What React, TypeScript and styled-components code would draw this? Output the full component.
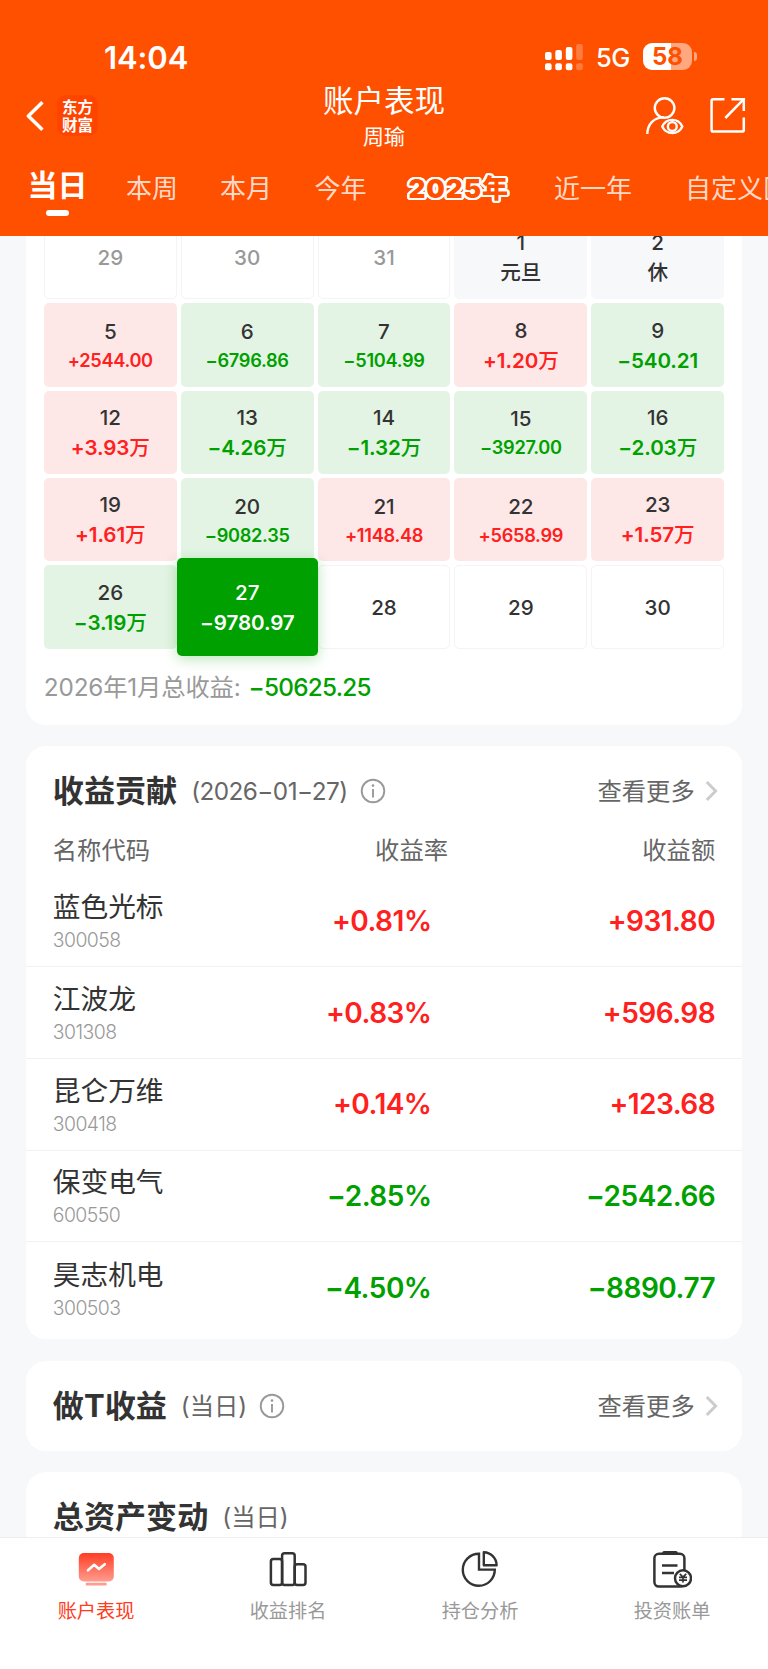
import React from "react";
import styled, { createGlobalStyle } from "styled-components";

const ORANGE = "#ff5000";
const RED = "#ff2020";
const GREEN = "#00a000";
const SANS = `Inter, "Noto Sans CJK SC", sans-serif`;

const GlobalStyle = createGlobalStyle`
  *, *::before, *::after { box-sizing: border-box; }
  body { margin: 0; background: #f7f8fa; font-family: ${SANS}; color: #333; }
  svg { display: block; flex: none; }
`;

const Screen = styled.div`
  width: 768px;
  height: 1669px;
  display: flex;
  flex-direction: column;
  overflow: hidden;
  background: #f7f8fa;
`;

/* ---------- header ---------- */

const Header = styled.header`
  flex: none;
  height: 235.7px;
  background: ${ORANGE};
  color: #fff;
`;

const StatusBar = styled.div`
  height: 80px;
  padding: 34px 71px 0 104px;
  display: flex;
  justify-content: space-between;
`;

const Clock = styled.div`
  font-size: 31px;
  font-weight: 600;
  line-height: 47px;
  letter-spacing: -0.1px;
`;

const StatusIcons = styled.div`
  height: 46px;
  display: flex;
  align-items: center;
`;

const Network = styled.span`
  margin: 2px 13px 0 13px;
  width: 34px;
  font-size: 25.5px;
  font-weight: 450;
  line-height: 46px;
  letter-spacing: -0.6px;
`;

const Battery = styled.div`
  width: 49px;
  height: 27px;
  margin-top: -2px;
  border-radius: 9px;
  background: linear-gradient(to right, #fff 58%, rgba(255, 255, 255, 0.5) 58%);
  color: ${ORANGE};
  font-size: 24px;
  font-weight: 700;
  line-height: 27px;
  text-align: center;
`;

const BatteryTip = styled.i`
  width: 3px;
  height: 9px;
  margin: -2px 0 0 2px;
  border-radius: 0 3px 3px 0;
  background: rgba(255, 255, 255, 0.5);
`;

const NavBar = styled.div`
  height: 76px;
  padding: 0 22px 0 26px;
  display: grid;
  grid-template-columns: 200px 1fr 204px;
`;

const NavLeft = styled.div`
  display: flex;
  align-items: flex-start;
  padding-top: 15px;
  gap: 13px;
`;

const Logo = styled.div`
  width: 41px;
  height: 41px;
  padding-top: 3px;
  border-radius: 9px;
  background: #ff4400;
  font-family: "Noto Sans CJK SC", sans-serif;
  font-size: 15.5px;
  font-weight: 700;
  line-height: 17.5px;
  text-align: center;
`;

const NavTitle = styled.div`
  text-align: center;
  padding-top: 1px;
`;

const PageTitle = styled.h1`
  margin: 0;
  font-size: 30.5px;
  font-weight: 400;
  line-height: 40px;
`;

const UserName = styled.div`
  padding-top: 1px;
  font-size: 21px;
  line-height: 30px;
`;

const NavRight = styled.div`
  display: flex;
  justify-content: flex-end;
  gap: 25px;
  padding-top: 15px;
`;

const Tabs = styled.nav`
  width: 768px;
  padding-left: 27.5px;
  display: flex;
  align-items: flex-start;
  overflow: hidden;
  white-space: nowrap;
`;

const Tab = styled.div<{ $gap: number }>`
  flex: none;
  margin-left: ${(p) => p.$gap}px;
  padding-top: 13px;
  font-size: 26px;
  line-height: 40px;
  color: rgba(255, 255, 255, 0.8);
`;

const ActiveTab = styled.div`
  width: 60px;
  height: 62px;
  padding-top: 9px;
  display: flex;
  flex-direction: column;
  align-items: center;
  font-size: 30px;
  font-weight: 600;
  line-height: 40px;

  &::after {
    content: "";
    width: 23px;
    height: 6px;
    margin-top: 5px;
    border-radius: 3px;
    background: #fff;
  }
`;

const outline = Array.from({ length: 20 }, (_, i) => {
  const a = (i / 20) * Math.PI * 2;
  return `${(Math.cos(a) * 2.4).toFixed(2)}px ${(Math.sin(a) * 2.4).toFixed(2)}px 0 #fff`;
}).join(", ");

const YearTab = styled(Tab)`
  width: 108px;
  padding-left: 2px;
  font-size: 26px;
  font-weight: 900;
  letter-spacing: 1px;
  color: ${ORANGE};
  text-shadow: ${outline};
`;

/* ---------- scroll area ---------- */

const Content = styled.main`
  flex: 1;
  min-height: 0;
  overflow: hidden;
  padding: 0 26.3px;
  display: flex;
  flex-direction: column;
  gap: 21.5px;
`;

const Card = styled.section`
  flex: none;
  border-radius: 20px;
  background: #fff;
`;

const CalendarCard = styled(Card)`
  height: 489.3px;
  padding: 0 17.5px;
  border-radius: 0 0 20px 20px;
`;

const Days = styled.div`
  margin-top: -19.7px;
  display: grid;
  grid-template-columns: repeat(5, 1fr);
  grid-auto-rows: 83.4px;
  gap: 3.9px;
`;

type Tone = "up" | "down" | "rest" | "muted" | "blank" | "selected";

const toneBg: Record<Tone, string> = {
  up: "#fde7e7",
  down: "#e3f4e4",
  rest: "#f7f8fa",
  muted: "#fff",
  blank: "#fff",
  selected: GREEN,
};

const toneValue: Record<Tone, string> = {
  up: RED,
  down: GREEN,
  rest: "#333",
  muted: "#999",
  blank: "#333",
  selected: "#fff",
};

const DayCell = styled.div<{ $tone: Tone; $small: boolean }>`
  padding-top: ${(p) => (p.$small ? 0 : 1.5)}px;
  display: flex;
  flex-direction: column;
  align-items: center;
  justify-content: center;
  border-radius: 5px;
  border: ${(p) => (p.$tone === "muted" || p.$tone === "blank" ? "1px solid #f4f4f6" : "0")};
  background: ${(p) => toneBg[p.$tone]};
  color: ${(p) => (p.$tone === "selected" ? "#fff" : p.$tone === "muted" ? "#999" : "#333")};
  ${(p) =>
    p.$tone === "selected" &&
    `
    z-index: 1;
    margin: -7px -4px -7px -3.6px;
    box-shadow: 0 3px 14px rgba(0, 160, 0, 0.28);
  `}
`;

const DayNumber = styled.div`
  font-size: 20.6px;
  font-weight: 550;
  line-height: 30px;
`;

const DayValue = styled.div<{ $tone: Tone; $small: boolean }>`
  font-size: ${(p) => (p.$small ? 18.2 : 20.6)}px;
  font-weight: 560;
  line-height: ${(p) => (p.$small ? 26 : 30)}px;
  letter-spacing: ${(p) => (p.$small ? -0.3 : -0.1)}px;
  color: ${(p) => toneValue[p.$tone]};
  white-space: nowrap;
`;

const Hanzi = styled.span`
  font-weight: 500;
`;

const MonthTotal = styled.div`
  margin-top: 19.4px;
  font-size: 24.3px;
  line-height: 38px;
  letter-spacing: -0.15px;
  color: #999;

  b {
    margin-left: 8px;
    font-weight: 550;
    letter-spacing: -0.75px;
    color: ${GREEN};
  }
`;

const SectionHead = styled.div`
  height: 90px;
  padding: 0 24px 0 26.5px;
  display: flex;
  align-items: center;
`;

const SectionTitle = styled.h2`
  margin: 0;
  font-size: 31.1px;
  font-weight: 700;
  line-height: 40px;
`;

const SectionNote = styled.span<{ $date?: boolean }>`
  margin: 0 ${(p) => (p.$date ? 12.5 : 11.5)}px 0 14px;
  font-size: 24.3px;
  line-height: 40px;
  letter-spacing: ${(p) => (p.$date ? -0.55 : 0)}px;
  color: #666;
`;

const More = styled.div`
  margin-left: auto;
  display: flex;
  align-items: center;
  gap: 10px;
  font-size: 24.3px;
  line-height: 40px;
  color: #666;
`;

const ContributionCard = styled(Card)`
  height: 593px;
`;

const columns = `
  display: grid;
  grid-template-columns: 200px 1fr 1fr;
  padding: 0 26.5px;
`;

const ListHead = styled.div`
  ${columns}
  height: 38px;
  margin-top: -5px;
  font-size: 24.3px;
  line-height: 38px;
  color: #666;

  > :nth-child(2) { text-align: right; padding-right: 36px; }
  > :nth-child(3) { text-align: right; }
`;

const Stock = styled.div`
  ${columns}
  height: 91.7px;
  align-items: center;
  border-bottom: 1px solid #f2f2f4;

  &:nth-child(3) { margin-top: 6px; }
  &:last-child { border-bottom: 0; }
`;

const StockName = styled.div`
  padding-top: 1px;
  font-size: 27.7px;
  line-height: 38px;
`;

const StockCode = styled.div`
  font-size: 19.4px;
  font-weight: 350;
  line-height: 28px;
  letter-spacing: -0.55px;
  color: #999;
`;

const Figure = styled.div<{ $up: boolean; $rate?: boolean }>`
  padding-right: ${(p) => (p.$rate ? 52.5 : 0)}px;
  font-size: 28px;
  font-weight: 630;
  line-height: 40px;
  letter-spacing: -0.5px;
  text-align: right;
  color: ${(p) => (p.$up ? RED : GREEN)};
`;

/* ---------- bottom bar ---------- */

const TabBar = styled.footer`
  flex: none;
  height: 132px;
  display: grid;
  grid-template-columns: repeat(4, 1fr);
  border-top: 1px solid #eee;
  background: #fff;
`;

const TabItem = styled.div<{ $active?: boolean }>`
  display: flex;
  flex-direction: column;
  align-items: center;
  padding-top: 11px;
  font-size: 19.2px;
  line-height: 28px;
  color: ${(p) => (p.$active ? "#ff3b20" : "#999")};

  svg { margin-bottom: 8px; }
`;

/* ---------- icons ---------- */

const Signal = () => (
  <svg width="38" height="27" viewBox="0 0 38 27" fill="#fff">
    <rect x="0" y="8" width="6.6" height="8" rx="2" />
    <rect x="10.3" y="6" width="6.6" height="10" rx="2" />
    <rect x="20.8" y="3" width="6.6" height="13" rx="2" />
    <rect x="31.2" y="0" width="6.6" height="16" rx="2" opacity="0.25" />
    <rect x="0" y="19.3" width="6.6" height="7" rx="2" />
    <rect x="10.3" y="19.3" width="6.6" height="7" rx="2" />
    <rect x="20.8" y="19.3" width="6.6" height="7" rx="2" />
    <rect x="31.2" y="19.3" width="6.6" height="7" rx="2" opacity="0.25" />
  </svg>
);

const BackIcon = () => (
  <svg width="18" height="42" viewBox="0 0 18 42" fill="none" stroke="#fff" strokeWidth="3.5">
    <path d="M16.4 7.2 L2.4 21 L16.4 34.8" strokeLinejoin="round" />
  </svg>
);

const ViewerIcon = () => (
  <svg width="38" height="42" viewBox="0 0 38 42" fill="none" stroke="#fff" strokeWidth="2.4">
    <circle cx="18.6" cy="13" r="9.8" />
    <path d="M1.3 39 C1.6 29 8 22.4 18 22.4" />
    <path d="M16.2 31.5 C20.5 22.6 32.2 22.6 36.3 31.5 C32.2 40.3 20.5 40.3 16.2 31.5 Z" strokeLinejoin="round" />
    <circle cx="26.3" cy="31.5" r="4.4" />
  </svg>
);

const ShareIcon = () => (
  <svg width="37" height="42" viewBox="0 0 37 42" fill="none" stroke="#fff" strokeWidth="2.5">
    <path d="M15.5 4.2 H4.2 Q2.6 4.2 2.6 5.8 V35 Q2.6 36.6 4.2 36.6 H33 Q34.8 36.6 34.8 35 V22.5" />
    <path d="M22.5 4.2 H34.8 V16" />
    <path d="M34.3 4.7 L16.3 23" />
  </svg>
);

const InfoIcon = () => (
  <svg width="26" height="26" viewBox="0 0 26 26" fill="none" stroke="#999" strokeWidth="1.9">
    <circle cx="13" cy="13" r="11.3" />
    <path d="M13 11 V19.4" />
    <circle cx="13" cy="7.6" r="1.3" fill="#999" stroke="none" />
  </svg>
);

const Chevron = () => (
  <svg width="13" height="22" viewBox="0 0 13 22" fill="none" stroke="#ccc" strokeWidth="3">
    <path d="M1.8 2 L10.6 11 L1.8 20" />
  </svg>
);

const PerformanceIcon = () => (
  <svg width="40" height="40" viewBox="0 0 40 40" fill="none">
    <defs>
      <linearGradient id="screenFill" x1="0" y1="0" x2="0" y2="1">
        <stop offset="0" stopColor="#ff3d24" />
        <stop offset="1" stopColor="#ff9c8e" />
      </linearGradient>
    </defs>
    <rect x="2.8" y="4" width="35" height="28.5" rx="5" fill="url(#screenFill)" />
    <rect x="9.7" y="33.8" width="21" height="2.8" rx="1" fill="#ff9c8e" />
    <path d="M12 21.3 L18.2 15.8 L23 20 L28.8 15.2" stroke="#fff" strokeWidth="2.6" strokeLinecap="round" strokeLinejoin="round" />
  </svg>
);

const RankIcon = () => (
  <svg width="40" height="40" viewBox="0 0 40 40" fill="none" stroke="#333" strokeWidth="2.5">
    <rect x="2.9" y="10" width="11.2" height="26" rx="2.5" />
    <rect x="14.1" y="4.3" width="12.6" height="31.7" rx="2.5" />
    <rect x="26.7" y="15.3" width="10.8" height="20.7" rx="2.5" />
  </svg>
);

const PieIcon = () => (
  <svg width="40" height="40" viewBox="0 0 40 40" fill="none" stroke="#333" strokeWidth="2.4">
    <path d="M19 4.8 A16 16 0 1 0 34.8 20.6 H19 Z" />
    <path d="M23.8 3.2 V16.2 H36.6 A13.2 13.2 0 0 0 23.8 3.2 Z" strokeLinejoin="round" />
  </svg>
);

const BillIcon = () => (
  <svg width="40" height="40" viewBox="0 0 40 40" fill="none" stroke="#333" strokeWidth="2.5">
    <rect x="2.4" y="4.8" width="30" height="32.8" rx="4.5" />
    <path d="M12 3.6 H24" strokeWidth="3.4" strokeLinecap="round" />
    <path d="M10 16.4 H25.5 M10 24 H22" />
    <circle cx="31" cy="29.3" r="8" fill="#fff" />
    <path d="M27.8 24.8 L31 28 L34.2 24.8 M27 28.4 H35 M27 31.2 H35 M31 28 V33.6" strokeWidth="1.7" />
  </svg>
);

/* ---------- data ---------- */

interface Day {
  day: string;
  tone: Tone;
  value?: string;
  hanzi?: string;
}

const days: Day[] = [
  { day: "29", tone: "muted" },
  { day: "30", tone: "muted" },
  { day: "31", tone: "muted" },
  { day: "1", tone: "rest", hanzi: "元旦" },
  { day: "2", tone: "rest", hanzi: "休" },
  { day: "5", tone: "up", value: "+2544.00" },
  { day: "6", tone: "down", value: "−6796.86" },
  { day: "7", tone: "down", value: "−5104.99" },
  { day: "8", tone: "up", value: "+1.20", hanzi: "万" },
  { day: "9", tone: "down", value: "−540.21" },
  { day: "12", tone: "up", value: "+3.93", hanzi: "万" },
  { day: "13", tone: "down", value: "−4.26", hanzi: "万" },
  { day: "14", tone: "down", value: "−1.32", hanzi: "万" },
  { day: "15", tone: "down", value: "−3927.00" },
  { day: "16", tone: "down", value: "−2.03", hanzi: "万" },
  { day: "19", tone: "up", value: "+1.61", hanzi: "万" },
  { day: "20", tone: "down", value: "−9082.35" },
  { day: "21", tone: "up", value: "+1148.48" },
  { day: "22", tone: "up", value: "+5658.99" },
  { day: "23", tone: "up", value: "+1.57", hanzi: "万" },
  { day: "26", tone: "down", value: "−3.19", hanzi: "万" },
  { day: "27", tone: "selected", value: "−9780.97" },
  { day: "28", tone: "blank" },
  { day: "29", tone: "blank" },
  { day: "30", tone: "blank" },
];

const stocks = [
  ["蓝色光标", "300058", "+0.81%", "+931.80"],
  ["江波龙", "301308", "+0.83%", "+596.98"],
  ["昆仑万维", "300418", "+0.14%", "+123.68"],
  ["保变电气", "600550", "−2.85%", "−2542.66"],
  ["昊志机电", "300503", "−4.50%", "−8890.77"],
];

const CalendarDay = ({ day, tone, value = "", hanzi }: Day) => {
  const small = tone !== "selected" && value.length > 7;
  return (
    <DayCell $tone={tone} $small={small}>
      <DayNumber>{day}</DayNumber>
      {(value || hanzi) && (
        <DayValue $tone={tone} $small={small}>
          {value}
          {hanzi && <Hanzi>{hanzi}</Hanzi>}
        </DayValue>
      )}
    </DayCell>
  );
};

const MoreLink = () => (
  <More>
    查看更多
    <Chevron />
  </More>
);

export default function App() {
  return (
    <Screen>
      <GlobalStyle />
      <Header>
        <StatusBar>
          <Clock>14:04</Clock>
          <StatusIcons>
            <Signal />
            <Network>5G</Network>
            <Battery>58</Battery>
            <BatteryTip />
          </StatusIcons>
        </StatusBar>
        <NavBar>
          <NavLeft>
            <BackIcon />
            <Logo>
              东方
              <br />
              财富
            </Logo>
          </NavLeft>
          <NavTitle>
            <PageTitle>账户表现</PageTitle>
            <UserName>周瑜</UserName>
          </NavTitle>
          <NavRight>
            <ViewerIcon />
            <ShareIcon />
          </NavRight>
        </NavBar>
        <Tabs>
          <ActiveTab>当日</ActiveTab>
          <Tab $gap={38.5}>本周</Tab>
          <Tab $gap={42}>本月</Tab>
          <Tab $gap={42.5}>今年</Tab>
          <YearTab $gap={40}>2025年</YearTab>
          <Tab $gap={39.5}>近一年</Tab>
          <Tab $gap={53}>自定义区间</Tab>
        </Tabs>
      </Header>

      <Content>
        <CalendarCard>
          <Days>
            {days.map((d, i) => (
              <CalendarDay key={i} {...d} />
            ))}
          </Days>
          <MonthTotal>
            2026年1月总收益:<b>−50625.25</b>
          </MonthTotal>
        </CalendarCard>

        <ContributionCard>
          <SectionHead>
            <SectionTitle>收益贡献</SectionTitle>
            <SectionNote $date>(2026−01−27)</SectionNote>
            <InfoIcon />
            <MoreLink />
          </SectionHead>
          <ListHead>
            <span>名称代码</span>
            <span>收益率</span>
            <span>收益额</span>
          </ListHead>
          {stocks.map(([name, code, rate, amount]) => (
            <Stock key={code}>
              <div>
                <StockName>{name}</StockName>
                <StockCode>{code}</StockCode>
              </div>
              <Figure $up={rate[0] === "+"} $rate>
                {rate}
              </Figure>
              <Figure $up={amount[0] === "+"}>{amount}</Figure>
            </Stock>
          ))}
        </ContributionCard>

        <Card>
          <SectionHead>
            <SectionTitle>做T收益</SectionTitle>
            <SectionNote>(当日)</SectionNote>
            <InfoIcon />
            <MoreLink />
          </SectionHead>
        </Card>

        <Card>
          <SectionHead>
            <SectionTitle>总资产变动</SectionTitle>
            <SectionNote>(当日)</SectionNote>
          </SectionHead>
        </Card>
      </Content>

      <TabBar>
        <TabItem $active>
          <PerformanceIcon />
          账户表现
        </TabItem>
        <TabItem>
          <RankIcon />
          收益排名
        </TabItem>
        <TabItem>
          <PieIcon />
          持仓分析
        </TabItem>
        <TabItem>
          <BillIcon />
          投资账单
        </TabItem>
      </TabBar>
    </Screen>
  );
}
